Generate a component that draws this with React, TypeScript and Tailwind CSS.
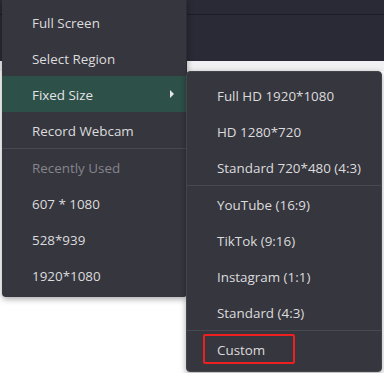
import React from 'react';

const mainItems: { label: string; kind?: 'active' | 'muted'; divider?: boolean; sub?: boolean }[] = [
  { label: 'Full Screen' },
  { label: 'Select Region' },
  { label: 'Fixed Size', kind: 'active', sub: true },
  { label: 'Record Webcam', divider: true },
  { label: 'Recently Used', kind: 'muted' },
  { label: '607 * 1080' },
  { label: '528*939' },
  { label: '1920*1080' },
];

const subItems: { label: string; divider?: boolean; boxed?: boolean }[] = [
  { label: 'Full HD 1920*1080' },
  { label: 'HD 1280*720' },
  { label: 'Standard 720*480 (4:3)', divider: true },
  { label: 'YouTube (16:9)' },
  { label: 'TikTok (9:16)' },
  { label: 'Instagram (1:1)' },
  { label: 'Standard (4:3)', divider: true },
  { label: 'Custom', boxed: true },
];

export default function App() {
  return (
    <div
      className="relative h-[373px] w-[384px] overflow-hidden bg-white text-[13.4px]"
      style={{ fontFamily: '"Open Sans", "Noto Sans", sans-serif' }}
    >
      {/* app backdrop */}
      <div className="h-[61px] bg-[#292a36]">
        <div className="h-[15px] border-b border-[#1d1d25]" />
      </div>
      <div className="h-[10px] bg-[#f1f1f3]" />

      {/* main menu */}
      <div className="absolute left-[2px] top-0 flex w-[185px] flex-col rounded-b-[4px] border-r border-[#2b2b33] bg-[#36363f] pb-[4px] pt-[4px] text-[#dcdcdc] shadow-[0_2px_6px_rgba(0,0,0,0.35)]">
        {mainItems.map((item) => (
          <React.Fragment key={item.label}>
            <div
              className={`flex h-9 items-center pl-[30px] pr-[12px] pt-[2px] ${
                item.kind === 'active' ? 'bg-[#2d5049] text-[#e4e4e4]' : ''
              } ${item.kind === 'muted' ? 'text-[#85858c]' : ''}`}
            >
              <span className="flex-1">{item.label}</span>
              {item.sub && (
                <span className="mb-[2px] h-0 w-0 border-y-[4px] border-l-[4px] border-y-transparent border-l-[#e6e6e6]" />
              )}
            </div>
            {item.divider && <div className="h-px bg-[#484852]" />}
          </React.Fragment>
        ))}
      </div>

      {/* fixed size submenu */}
      <div className="absolute left-[186px] top-[71px] flex w-[196px] flex-col rounded-[4px] border border-[#44444d] bg-[#36363f] pb-[4px] pt-[5px] text-[#dcdcdc] shadow-[0_2px_6px_rgba(0,0,0,0.35)]">
        {subItems.map((item) => (
          <React.Fragment key={item.label}>
            {item.boxed ? (
              <div className="flex h-9 items-center pl-[16px]">
                <span className="flex h-[30px] w-[92px] items-center rounded-[2px] border-2 border-[#ee1f1f] pl-[12px] pt-[2px]">
                  {item.label}
                </span>
              </div>
            ) : (
              <div className="flex h-9 items-center pl-[30px] pt-[2px]">{item.label}</div>
            )}
            {item.divider && <div className="h-px bg-[#484852]" />}
          </React.Fragment>
        ))}
      </div>
    </div>
  );
}
